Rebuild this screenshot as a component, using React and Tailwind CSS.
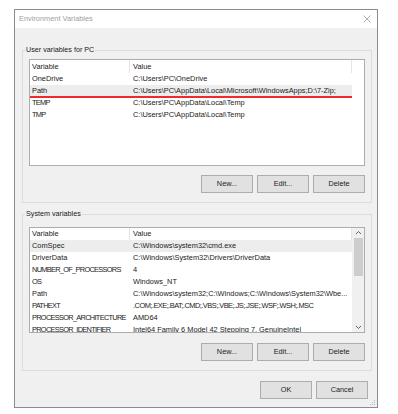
import React from 'react';

const font = { fontFamily: '"Liberation Sans", Arial, sans-serif' };

const userVars = [
  ['OneDrive', 'C:\\Users\\PC\\OneDrive'],
  ['Path', 'C:\\Users\\PC\\AppData\\Local\\Microsoft\\WindowsApps;D:\\7-Zip;', true],
  ['TEMP', 'C:\\Users\\PC\\AppData\\Local\\Temp'],
  ['TMP', 'C:\\Users\\PC\\AppData\\Local\\Temp'],
];

const sysVars = [
  ['ComSpec', 'C:\\Windows\\system32\\cmd.exe', true],
  ['DriverData', 'C:\\Windows\\System32\\Drivers\\DriverData'],
  ['NUMBER_OF_PROCESSORS', '4'],
  ['OS', 'Windows_NT'],
  ['Path', 'C:\\Windows\\system32;C:\\Windows;C:\\Windows\\System32\\Wbe...'],
  ['PATHEXT', '.COM;.EXE;.BAT;.CMD;.VBS;.VBE;.JS;.JSE;.WSF;.WSH;.MSC', false, true],
  ['PROCESSOR_ARCHITECTURE', 'AMD64'],
  ['PROCESSOR_IDENTIFIER', 'Intel64 Family 6 Model 42 Stepping 7, GenuineIntel'],
];

function Button({ children }) {
  return (
    <div className="w-[52px] h-[18px] flex items-center justify-center bg-[#e1e1e1] border border-[#adadad] text-[7.3px] text-[#222]">
      {children}
    </div>
  );
}

function Header({ tall }) {
  return (
    <div className={`flex text-[7.4px] text-[#222] ${tall ? 'h-[13px]' : 'h-[12px]'}`}>
      <div className="w-[100px] pl-[2px] flex items-center border-r border-[#e5e5e5]">Variable</div>
      <div className="w-[222px] pl-[3px] flex items-center border-r border-[#e5e5e5]">Value</div>
    </div>
  );
}

function Row({ name, value, selected, marked, tight }) {
  const caps = name === name.toUpperCase();
  return (
    <div className={`relative flex w-[322px] h-[12px] items-center text-[7.4px] text-[#1a1a1a] ${selected ? 'bg-[#ededed]' : ''}`}>
      <div className={`w-[100px] pl-[2px] whitespace-nowrap overflow-hidden ${caps ? 'tracking-[-0.7px]' : ''}`}>{name}</div>
      <div className={`w-[222px] pl-[3px] whitespace-nowrap overflow-hidden ${tight ? 'tracking-[-0.5px]' : ''}`}>{value}</div>
      {marked && <div className="absolute left-0 bottom-[-1px] w-[322px] h-[2px] bg-[#ee2a2f]" />}
    </div>
  );
}

function GroupBox({ label, className, children }) {
  return (
    <div className={`w-[350px] border border-[#dcdcdc] px-[6px] pb-[9px] ${className}`}>
      <div className="-mt-[6px] -ml-[4px] h-[10px] leading-[10px] w-fit px-[1px] bg-[#f0f0f0] text-[7.2px] text-[#1a1a1a]">
        {label}
      </div>
      {children}
    </div>
  );
}

function ButtonRow() {
  return (
    <div className="flex justify-end gap-[4px]">
      <Button>New...</Button>
      <Button>Edit...</Button>
      <Button>Delete</Button>
    </div>
  );
}

export default function App() {
  return (
    <div className="w-[398px] h-[414px] bg-white pl-[14px] pt-[9px]" style={font}>
      <div className="w-[364px] h-[399px] border border-[#8a8a92] bg-[#f0f0f0] flex flex-col relative">
        {/* Title bar */}
        <div className="h-[18px] bg-white flex items-center justify-between pl-[4px] pr-[5px]">
          <span className="text-[7.4px] text-[#a0a0a0]">Environment Variables</span>
          <svg width="8" height="8" viewBox="0 0 8 8" className="mr-[1px]">
            <path d="M0.5 0.5 L7.5 7.5 M7.5 0.5 L0.5 7.5" stroke="#9a9a9a" strokeWidth="0.8" />
          </svg>
        </div>

        <div className="flex flex-col pl-[7px]">
          {/* User variables */}
          <GroupBox label="User variables for PC" className="mt-[22px]">
            <div className="mt-[4px] h-[107px] bg-white border border-[#adadad]">
              <Header tall />
              {userVars.map(([n, v, s]) => (
                <Row key={n} name={n} value={v} selected={s} marked={s} />
              ))}
            </div>
            <div className="mt-[9px]">
              <ButtonRow />
            </div>
          </GroupBox>

          {/* System variables */}
          <GroupBox label="System variables" className="mt-[11px]">
            <div className="mt-[8px] h-[106px] bg-white border border-[#adadad] flex overflow-hidden">
              <div className="w-[322px]">
                <Header />
                {sysVars.map(([n, v, s, t]) => (
                  <Row key={n} name={n} value={v} selected={s} tight={t} />
                ))}
              </div>
              <div className="w-[12px] ml-auto bg-[#f0f0f0] flex flex-col items-center">
                <svg width="7" height="10" viewBox="0 0 7 10">
                  <path d="M1 6 L3.5 3.5 L6 6" stroke="#606060" strokeWidth="1" fill="none" />
                </svg>
                <div className="w-[9px] h-[38px] bg-[#cdcdcd]" />
                <div className="flex-1" />
                <svg width="7" height="10" viewBox="0 0 7 10">
                  <path d="M1 4 L3.5 6.5 L6 4" stroke="#606060" strokeWidth="1" fill="none" />
                </svg>
              </div>
            </div>
            <div className="mt-[10px]">
              <ButtonRow />
            </div>
          </GroupBox>

          {/* OK / Cancel */}
          <div className="mt-[10px] w-[346px] flex justify-end gap-[4px]">
            <Button>OK</Button>
            <Button>Cancel</Button>
          </div>
        </div>

        {/* Resize grip */}
        <svg width="6" height="6" viewBox="0 0 6 6" className="absolute right-[1px] bottom-[1px]">
          <rect x="4" y="0" width="1" height="1" fill="#b8b8b8" />
          <rect x="2" y="2" width="1" height="1" fill="#b8b8b8" />
          <rect x="4" y="2" width="1" height="1" fill="#b8b8b8" />
          <rect x="0" y="4" width="1" height="1" fill="#b8b8b8" />
          <rect x="2" y="4" width="1" height="1" fill="#b8b8b8" />
          <rect x="4" y="4" width="1" height="1" fill="#b8b8b8" />
        </svg>
      </div>
    </div>
  );
}
